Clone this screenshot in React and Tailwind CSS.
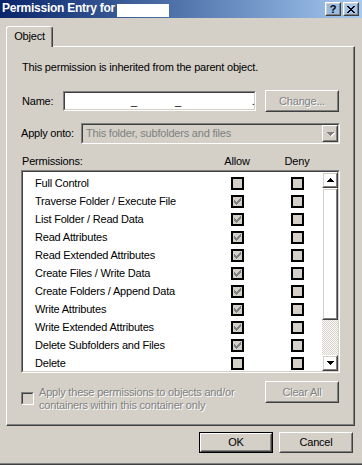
import * as React from 'react';

const UP = ['...x...', '..xxx..', '.xxxxx.', 'xxxxxxx'];
const DOWN = ['xxxxxxx', '.xxxxx.', '..xxx..', '...x...'];
const CLOSE = ['xx....xx', '.xx..xx.', '..xxxx..', '...xx...', '..xxxx..', '.xx..xx.', 'xx....xx'];
const CHECK = ['......x', '.....xx', 'x...xxx', 'xx.xxx.', 'xxxxx..', '.xxx...', '..x....'];

const PERMISSIONS = [
  ['Full Control', false],
  ['Traverse Folder / Execute File', true],
  ['List Folder / Read Data', true],
  ['Read Attributes', true],
  ['Read Extended Attributes', true],
  ['Create Files / Write Data', true],
  ['Create Folders / Append Data', true],
  ['Write Attributes', true],
  ['Write Extended Attributes', true],
  ['Delete Subfolders and Files', true],
  ['Delete', false],
];

const disabledText = 'text-[#808080] [text-shadow:1px_1px_0_#fff]';

function Pix({ rows, color, className }) {
  const w = rows[0].length;
  const h = rows.length;
  const rects = [];
  rows.forEach((r, y) =>
    [...r].forEach((c, x) => {
      if (c === 'x') rects.push(<rect key={x + '-' + y} x={x} y={y} width="1" height="1" />);
    })
  );
  return (
    <svg width={w} height={h} viewBox={`0 0 ${w} ${h}`} fill={color} shapeRendering="crispEdges" className={className}>
      {rects}
    </svg>
  );
}

function Raised({ className = '', innerClassName = '', children }) {
  return (
    <div className={`flex border border-t-white border-l-white border-r-[#404040] border-b-[#404040] ${className}`}>
      <div className={`flex flex-1 items-center justify-center border border-t-[#d4d0c8] border-l-[#d4d0c8] border-r-[#808080] border-b-[#808080] ${innerClassName}`}>
        {children}
      </div>
    </div>
  );
}

function Sunken({ className = '', innerClassName = '', children }) {
  return (
    <div className={`flex border border-t-[#808080] border-l-[#808080] border-r-white border-b-white ${className}`}>
      <div className={`flex flex-1 min-w-0 border border-t-[#404040] border-l-[#404040] border-r-[#d4d0c8] border-b-[#d4d0c8] ${innerClassName}`}>
        {children}
      </div>
    </div>
  );
}

function FlatCheck({ checked }) {
  return (
    <div className="flex h-[13px] w-[13px] shrink-0 items-center justify-center border-2 border-black bg-[#d4d0c8]">
      {checked && <Pix rows={CHECK} color="#808080" />}
    </div>
  );
}

export default function App() {
  return (
    <div className="flex h-[465px] w-[362px] flex-col overflow-hidden bg-[#d4d0c8] font-['Liberation_Sans',Arial,sans-serif] text-[11px] tracking-[-0.2px] text-black">
      {/* title bar */}
      <div className="flex h-[18px] shrink-0 items-start bg-linear-to-r from-[#0a246a] to-[#a6caf0] pl-[2px] pr-[3px] pt-[2px]">
        <span className="text-[12px] font-bold leading-[13px] tracking-[-0.25px] text-white">Permission Entry for</span>
        <span className="ml-[2px] mt-[2px] h-[13px] w-[52px] bg-white" />
        <div className="ml-auto flex gap-[2px]">
          <Raised className="h-[14px] w-[16px]">
            <span className="text-[11px] font-bold leading-none tracking-normal">?</span>
          </Raised>
          <Raised className="h-[14px] w-[16px]">
            <Pix rows={CLOSE} color="#000" />
          </Raised>
        </div>
      </div>

      {/* tab */}
      <div className="mt-[8px] flex pl-[6px]">
        <div className="relative z-10 -mb-[1px] flex h-[21px] w-[47px] items-center justify-center rounded-t-[3px] border-l border-t border-r border-l-white border-t-white border-r-[#404040] bg-[#d4d0c8] pb-[1px] shadow-[inset_-1px_0_#808080]">
          Object
        </div>
      </div>

      {/* panel */}
      <div className="ml-[6px] flex h-[380px] w-[349px] shrink-0 flex-col border border-t-white border-l-white border-r-[#404040] border-b-[#404040] pl-[14px] pr-[14px] shadow-[inset_-1px_-1px_#808080]">
        <p className="mt-[14px] pl-[1px] leading-[13px]">This permission is inherited from the parent object.</p>

        <div className="mt-[16px] flex h-[22px] items-center">
          <span className="w-[42px] pl-[1px]">Name:</span>
          <Sunken className="h-[20px] w-[193px]" innerClassName="items-center bg-white leading-[13px]">
            <span className="ml-[66px]">_</span>
            <span className="ml-[38px]">_</span>
            <span className="ml-[71px]">.</span>
          </Sunken>
          <Raised className="ml-[9px] h-[22px] w-[74px]">
            <span className={disabledText}>Change...</span>
          </Raised>
        </div>

        <div className="mt-[11px] flex h-[21px] items-center">
          <span className="w-[60px]">Apply onto:</span>
          <Sunken className="h-[21px] w-[259px]" innerClassName="items-center bg-[#d4d0c8]">
            <span className="flex-1 pl-[3px] text-[#808080]">This folder, subfolders and files</span>
            <Raised className="h-full w-[16px]">
              <Pix rows={DOWN} color="#808080" className="[filter:drop-shadow(1px_1px_0_#fff)]" />
            </Raised>
          </Sunken>
        </div>

        <div className="mt-[11px] flex leading-[13px]">
          <span className="w-[196px] pl-[1px]">Permissions:</span>
          <span className="w-[40px] text-center">Allow</span>
          <span className="ml-[20px] w-[40px] text-center">Deny</span>
        </div>

        <Sunken className="mt-[2px] h-[203px] w-[319px]" innerClassName="bg-white">
          <div className="flex-1 overflow-hidden pt-[2px]">
            {PERMISSIONS.map(([label, allow]) => (
              <div key={label} className="flex h-[18px] items-center pl-[12px]">
                <span className="w-[196px] shrink-0 whitespace-nowrap">{label}</span>
                <FlatCheck checked={allow} />
                <div className="ml-[47px]">
                  <FlatCheck checked={false} />
                </div>
              </div>
            ))}
          </div>
          <div className="flex w-[16px] flex-col">
            <Raised className="h-[16px] shrink-0">
              <Pix rows={UP} color="#000" />
            </Raised>
            <Raised className="h-[132px] shrink-0" />
            <div className="flex-1 bg-[conic-gradient(#fff_25%,#d4d0c8_0_50%,#fff_0_75%,#d4d0c8_0)] bg-[length:2px_2px]" />
            <Raised className="h-[16px] shrink-0">
              <Pix rows={DOWN} color="#000" />
            </Raised>
          </div>
        </Sunken>

        <div className="mt-[8px] flex items-start">
          <Sunken className="mt-[11px] h-[13px] w-[13px] shrink-0" innerClassName="bg-[#d4d0c8]" />
          <p className={`ml-[5px] mt-[5px] leading-[12.5px] ${disabledText}`}>
            Apply these permissions to objects and/or
            <br />
            containers within this container only
          </p>
          <Raised className="ml-auto mr-[1px] h-[22px] w-[74px] shrink-0">
            <span className={disabledText}>Clear All</span>
          </Raised>
        </div>
      </div>

      {/* dialog buttons */}
      <div className="mt-[6px] flex justify-end gap-[6px] pr-[9px]">
        <div className="flex h-[21px] w-[74px] border border-black">
          <Raised className="flex-1">OK</Raised>
        </div>
        <Raised className="h-[21px] w-[74px]">Cancel</Raised>
      </div>

      <div className="flex-1" />
      <div className="h-[1px] shrink-0 bg-[#808080]" />
      <div className="h-[1px] shrink-0 bg-[#404040]" />
    </div>
  );
}
